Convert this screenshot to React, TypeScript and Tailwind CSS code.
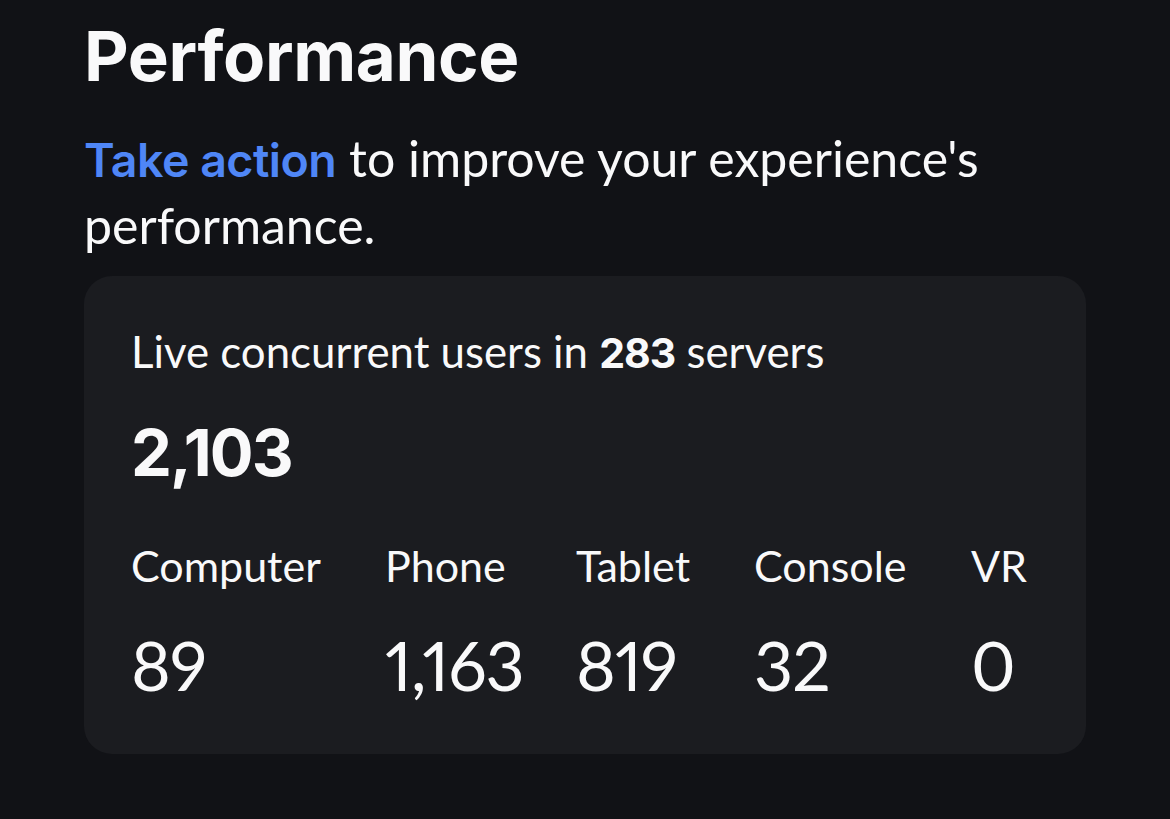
const devices = [
  { label: 'Computer', value: '89', width: 'w-[188px]' },
  { label: 'Phone', value: '1,163', width: 'w-[125px]' },
  { label: 'Tablet', value: '819', width: 'w-[112px]' },
  { label: 'Console', value: '32', width: 'w-[151px]' },
  { label: 'VR', value: '0', width: 'w-auto' },
]

export default function App() {
  return (
    <div className="min-h-[819px] bg-[#111216] px-[84px] pt-[14px] text-[#f9f9fa] font-['Lato',sans-serif]">
      <h1 className="font-['Inter',sans-serif] text-[69px] font-bold leading-[84px] tracking-[-0.4px]">Performance</h1>
      <p className="mt-[28px] text-[50px] leading-[65px]">
        <span className="font-['Inter',sans-serif] font-semibold text-[#4f86f6] text-[46.5px] tracking-[-0.5px]">Take action</span> to improve your experience's performance.
      </p>

      <div className="mt-[18px] w-[1002px] rounded-[28px] bg-[#1b1c20] px-[47px] pt-[48px] pb-[57px]">
        <p className="text-[43.8px] leading-[54px]">
          Live concurrent users in <span className="font-['Inter',sans-serif] font-bold text-[41px] tracking-[-1px]">283</span> servers
        </p>
        <p className="mt-[33px] font-['Inter',sans-serif] text-[65px] font-bold leading-[80px] tracking-[-2px]">2,103</p>

        <div className="mt-[46px] flex gap-[66px]">
          {devices.map((d) => (
            <div key={d.label} className={`flex shrink-0 flex-col ${d.width}`}>
              <span className="text-[43px] leading-[54px] whitespace-nowrap">{d.label}</span>
              <span className="mt-[40px] text-[68px] leading-[64px] tracking-[-1px] whitespace-nowrap proportional-nums">{d.value}</span>
            </div>
          ))}
        </div>
      </div>
    </div>
  )
}
